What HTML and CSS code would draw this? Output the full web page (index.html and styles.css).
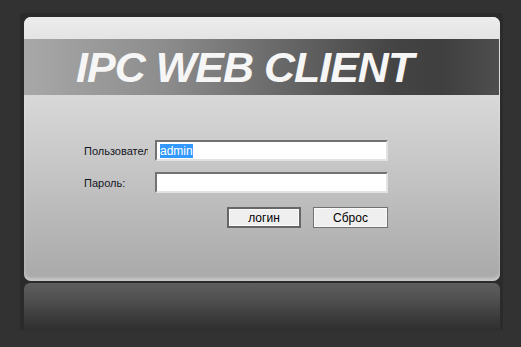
FILE: index.html
```html
<!DOCTYPE html>
<html lang="ru">
<head>
    <meta charset="UTF-8">
    <meta name="viewport" content="width=device-width, initial-scale=1.0">
    <title>IPC WEB CLIENT</title>
    <link rel="stylesheet" href="styles.css">
</head>
<body>
    <div class="stage">
        <!-- Login panel -->
        <div class="login-panel">
            <div class="panel-top"></div>
            <div class="panel-banner">
                <h1>IPC WEB CLIENT</h1>
            </div>
            <form class="login-form" onsubmit="return false;">
                <label class="login-label" for="user">Пользователь:</label>
                <input class="login-input" type="text" id="user" value="admin" autofocus>

                <label class="login-label" for="pass">Пароль:</label>
                <input class="login-input" type="password" id="pass">

                <div class="login-buttons">
                    <button type="submit" class="btn btn-default">логин</button>
                    <button type="reset" class="btn">Сброс</button>
                </div>
            </form>
        </div>
        <!-- Reflection under the panel -->
        <div class="panel-reflection"></div>
    </div>

    <script>
        const userInput = document.getElementById('user');
        userInput.focus();
        userInput.select();
    </script>
</body>
</html>
```

FILE: styles.css
```css
:root {
    --page-bg: #323232;
    --stage-bg: #2b2b2b;
    --text-dark: #14141e;
    --input-dark: #727272;
    --input-light: #e2e2e2;
}

body {
    margin: 0;
    padding: 0;
    background: var(--page-bg);
    font-family: 'Liberation Sans', Arial, sans-serif;
    overflow: hidden;
}

.stage {
    display: flex;
    flex-direction: column;
    gap: 2px;
    width: 476px;
    height: 313px;
    margin: 13px 0 0 20px;
    padding: 4px 3px 0 4px;
    background: var(--stage-bg);
}

.login-panel {
    display: flex;
    flex-direction: column;
    height: 264px;
    border-radius: 7px;
    overflow: hidden;
    background: linear-gradient(#d8d8d8 30%, #bdbdbd 70%, #a9a9a9);
    box-shadow: inset 0 -3px 3px rgba(255, 255, 255, 0.35);
}

.panel-top {
    height: 22px;
    background: linear-gradient(#ececec, #e4e4e4);
}

.panel-banner {
    height: 56px;
    margin-right: 1px;
    background: linear-gradient(90deg, #a8a8a8 0%, #8c8c8c 30%, #676767 55%, #444 78%, #3f3f3f 88%, #4e4e4e 100%);
}

.panel-banner h1 {
    margin: 0;
    padding-left: 52px;
    font-size: 43px;
    line-height: 56px;
    font-weight: bold;
    font-style: italic;
    letter-spacing: -1px;
    color: #f6f6f6;
}

.login-form {
    display: grid;
    grid-template-columns: 71px 233px;
    align-items: center;
    row-gap: 11px;
    margin: 45px 0 0 60px;
}

/* the label cell is narrow, so the long label is clipped as in the original */
.login-label {
    width: 64px;
    overflow: hidden;
    white-space: nowrap;
    font-size: 11px;
    color: var(--text-dark);
}

.login-input {
    box-sizing: border-box;
    width: 233px;
    height: 21px;
    margin: 0;
    padding: 0 3px;
    border: 2px solid;
    border-color: var(--input-dark) var(--input-light) var(--input-light) var(--input-dark);
    background: #fff;
    font-family: 'Liberation Sans', Arial, sans-serif;
    font-size: 12px;
    color: #000;
    outline: none;
}

.login-input::selection {
    background: #3399ff;
    color: #fff;
}

.login-buttons {
    grid-column: 2;
    display: flex;
    justify-content: flex-end;
    gap: 12px;
    margin-top: 3px;
}

.btn {
    box-sizing: border-box;
    width: 75px;
    height: 21px;
    padding: 0;
    border: 1px solid #707070;
    box-shadow: inset 0 0 0 1px #fafafa;
    background: #efefef;
    font-family: 'Liberation Sans', Arial, sans-serif;
    font-size: 12px;
    color: #000;
}

.btn-default {
    width: 74px;
    border: 2px solid #666;
}

.panel-reflection {
    flex: 1;
    border-radius: 6px 6px 0 0;
    background: linear-gradient(#5e5e5e, #505050 35%, #3a3a3a 75%, #2f2f2f);
}
```
